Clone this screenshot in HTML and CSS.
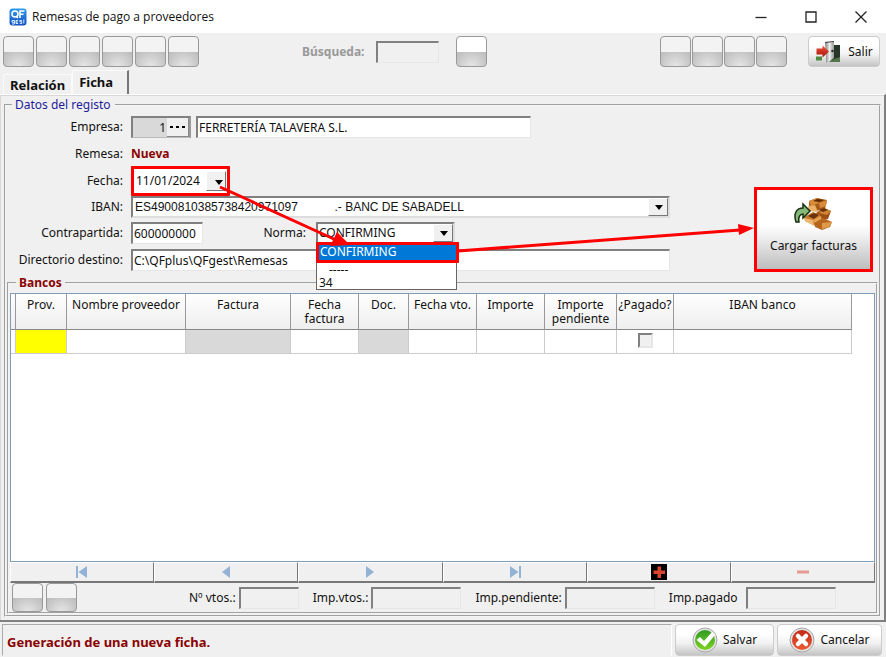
FILE: index.html
```html
<!DOCTYPE html>
<html lang="es">
<head>
<meta charset="utf-8">
<meta name="viewport" content="width=device-width, initial-scale=1">
<title>Remesas de pago a proveedores</title>
<link rel="stylesheet" href="styles.css">
</head>
<body>
<div class="window">
  <header class="titlebar">
    <svg class="app-icon" viewBox="0 0 18 18" aria-hidden="true">
      <defs><linearGradient id="blue" x1="0" y1="0" x2="0" y2="1"><stop offset="0" stop-color="#2f9bf0"/><stop offset="1" stop-color="#1450c0"/></linearGradient></defs>
      <rect x="0.5" y="0.5" width="17" height="17" rx="3" fill="url(#blue)"/>
      <circle cx="6" cy="6" r="3" fill="none" stroke="#fff" stroke-width="1.6"/>
      <path d="M7 8l2 2M11 10V3h4.5M11 6.300h3.500" fill="none" stroke="#fff" stroke-width="1.600"/>
      <path d="M3 12.500h2.500v3.500H3M3 12.500v1.800h2.500M7 14h2M9 12.500H7v3h2.200M12.800 12.500h-2v1.200h2v1.800h-2M14.800 11.500v4" fill="none" stroke="#d4e9ff" stroke-width="1"/>
    </svg>
    <h1>Remesas de pago a proveedores</h1>
    <div class="window-controls">
      <button type="button" aria-label="Minimizar"><svg viewBox="0 0 12 12"><path d="M0.500 6.500h11"/></svg></button>
      <button type="button" aria-label="Maximizar"><svg viewBox="0 0 12 12"><path d="M1 1h10v10H1z"/></svg></button>
      <button type="button" aria-label="Cerrar"><svg viewBox="0 0 12 12"><path d="M0.500 0.500l11 11M11.500 0.500l-11 11"/></svg></button>
    </div>
  </header>

  <div class="toolbar">
    <div class="group">
      <button type="button" class="glass" aria-label="Primero"></button>
      <button type="button" class="glass" aria-label="Anterior"></button>
      <button type="button" class="glass" aria-label="Siguiente"></button>
      <button type="button" class="glass" aria-label="Último"></button>
      <button type="button" class="glass" aria-label="Añadir"></button>
      <button type="button" class="glass" aria-label="Editar"></button>
    </div>
    <div class="search">
      <label for="busqueda">Búsqueda:</label>
      <input id="busqueda" class="sunken" type="text" disabled>
      <button type="button" class="glass" aria-label="Buscar"></button>
    </div>
    <div class="group actions">
      <button type="button" class="glass" aria-label="Listar"></button>
      <button type="button" class="glass" aria-label="Imprimir"></button>
      <button type="button" class="glass" aria-label="Exportar"></button>
      <button type="button" class="glass" aria-label="Opciones"></button>
    </div>
    <button type="button" class="push exit">
      <svg class="exit-icon" viewBox="0 0 26 24" aria-hidden="true">
        <defs><linearGradient id="door" x1="0" y1="0" x2="1" y2="0"><stop offset="0" stop-color="#777"/><stop offset="0.500" stop-color="#eee"/><stop offset="1" stop-color="#999"/></linearGradient>
        <linearGradient id="arrowRed" x1="0" y1="0" x2="0" y2="1"><stop offset="0" stop-color="#f0523a"/><stop offset="1" stop-color="#a81208"/></linearGradient></defs>
        <path d="M18 5h7v17h-9z" fill="#26352a"/>
        <path d="M16 20l9-3v5h-11z" fill="#52764c"/>
        <path d="M10 2l9-1v17l-8 5V14z" fill="url(#door)"/>
        <path d="M10 2l9-1v1l-9 1z" fill="#444"/>
        <circle cx="17.500" cy="11" r="1.300" fill="#333"/>
        <path d="M1 16.500h6v4H1z" fill="#4f8a42"/>
        <path d="M1.500 8.500h6V5.500l6.500 6-6.500 6v-3h-6z" fill="url(#arrowRed)"/>
      </svg>
      Salir
    </button>
  </div>

  <nav class="tabs">
    <button type="button" class="tab">Relación</button>
    <button type="button" class="tab active">Ficha</button>
  </nav>

  <main class="page">
    <fieldset class="record">
      <legend>Datos del registo</legend>
      <div class="form">
        <div class="fields">
          <label for="empresa">Empresa:</label>
          <div class="row">
            <span class="code"><input id="empresa" type="text" value="1"><button type="button" aria-label="Elegir empresa"><svg viewBox="0 0 16 4"><path d="M0 1h3v2H0zM6 1h3v2H6zM12 1h3v2h-3z"/></svg></button></span>
            <input class="sunken company" type="text" aria-label="Nombre de la empresa" value="FERRETERÍA TALAVERA S.L.">
          </div>
          <span class="caption">Remesa:</span>
          <div class="row"><strong class="new">Nueva</strong></div>
          <label for="fecha">Fecha:</label>
          <div class="row">
            <span class="combo date marked"><input id="fecha" type="text" value="11/01/2024"></span>
          </div>
          <label for="iban">IBAN:</label>
          <div class="row">
            <span class="combo iban"><select id="iban"><option>ES4900810385738420971097&nbsp;&nbsp;&nbsp;&nbsp;&nbsp;&nbsp;&nbsp;&nbsp;&nbsp;&nbsp;&nbsp;.- BANC DE SABADELL</option></select></span>
          </div>
          <label for="contra">Contrapartida:</label>
          <div class="row">
            <input id="contra" class="sunken account" type="text" value="600000000">
            <label for="norma" class="norma-label">Norma:</label>
            <span class="combo norma">
              <select id="norma"><option>CONFIRMING</option><option>-----</option><option>34</option></select>
              <span class="menu">
                <span class="item selected marked">CONFIRMING</span>
                <span class="item dashes">-----</span>
                <span class="item">34</span>
              </span>
            </span>
          </div>
          <label for="directorio">Directorio destino:</label>
          <div class="row"><input id="directorio" class="sunken folder" type="text" value="C:\QFplus\QFgest\Remesas"></div>
        </div>
        <button type="button" class="load marked">
          <svg class="boxes" viewBox="0 0 40 34" aria-hidden="true">
            <path d="M15 4l8-3 10 2-2 9-9 2-7-3z" fill="#a85a18"/>
            <path d="M15 4l8-3 2 5-8 3zM25 6l8-3-1 6-6 2z" fill="#d88c3a"/>
            <path d="M19 4l4-2 7 1-5 2z" fill="#5b2a08"/>
            <path d="M14 9l7-1 3 7-9-1z" fill="#eab068"/>
            <path d="M22 16l8-5 7 3-3 8-9 1z" fill="#9c4f14"/>
            <path d="M30 11l7 3-4 4-8-2z" fill="#d38430"/>
            <path d="M25 13l5-2 4 2-5 2z" fill="#6b330c"/>
            <path d="M10 20l9-5 7 3 2 10-8 0-9-4z" fill="#c97a2b"/>
            <path d="M14 19l6-3 5 2-5 4z" fill="#6b330c"/>
            <path d="M10 21l9 2 1 6-9-5z" fill="#edb673"/>
            <path d="M19 23l8-4 1 5-7 3z" fill="#e5a250"/>
            <path d="M20 26l9-5 9 4-2 5-8 3-7-3z" fill="#b5651d"/>
            <path d="M28 26l10-1-3 5-7 2z" fill="#df9a48"/>
            <path d="M2 25C-1 16 3 11 9 11V7l7 7-7 7v-4c-3 0-5 3-4 8z" fill="#86b878" stroke="#17300f" stroke-width="1.500"/>
          </svg>
          Cargar facturas
        </button>
      </div>

      <fieldset class="banks">
        <legend>Bancos</legend>
        <div class="sheet">
          <table>
            <colgroup><col class="c-mark"><col class="c-prov"><col class="c-name"><col class="c-invoice"><col class="c-date"><col class="c-doc"><col class="c-date"><col class="c-date"><col class="c-pending"><col class="c-paid"><col></colgroup>
            <thead><tr><th></th><th>Prov.</th><th>Nombre proveedor</th><th>Factura</th><th>Fecha factura</th><th>Doc.</th><th>Fecha vto.</th><th>Importe</th><th>Importe pendiente</th><th>¿Pagado?</th><th>IBAN banco</th></tr></thead>
            <tbody><tr><td></td><td class="required"></td><td></td><td class="locked"></td><td></td><td class="locked"></td><td></td><td></td><td></td><td class="check"><input type="checkbox" aria-label="Pagado"></td><td></td></tr></tbody>
          </table>
        </div>
        <div class="navigator">
          <button type="button" aria-label="Primera línea"><svg viewBox="0 0 16 16"><path d="M2 2h2v12H2zM13 2v12L4.500 8z"/></svg></button>
          <button type="button" aria-label="Línea anterior"><svg viewBox="0 0 16 16"><path d="M12 2v12L4 8z"/></svg></button>
          <button type="button" aria-label="Línea siguiente"><svg viewBox="0 0 16 16"><path d="M4 2v12l8-6z"/></svg></button>
          <button type="button" aria-label="Última línea"><svg viewBox="0 0 16 16"><path d="M12 2h2v12h-2zM3 2v12l8.500-6z"/></svg></button>
          <button type="button" aria-label="Añadir línea"><svg viewBox="0 0 16 16"><path d="M0 0h16v16H0z" fill="#000"/><path d="M6.500 2.500h3.500v4h4V10h-4v4H6.500v-4h-4V6.500h4z" fill="#d9452f"/></svg></button>
          <button type="button" aria-label="Borrar línea"><svg viewBox="0 0 16 16"><path d="M2 6.500h12v3H2z" fill="#e39b92"/></svg></button>
        </div>
        <div class="totals">
          <div class="group">
            <button type="button" class="glass" aria-label="Marcar"></button>
            <button type="button" class="glass" aria-label="Desmarcar"></button>
          </div>
          <div class="total count"><label for="t1">Nº vtos.:</label><input id="t1" class="sunken" type="text" readonly></div>
          <div class="total"><label for="t2">Imp.vtos.:</label><input id="t2" class="sunken" type="text" readonly></div>
          <div class="total"><label for="t3">Imp.pendiente:</label><input id="t3" class="sunken" type="text" readonly></div>
          <div class="total paid"><label for="t4">Imp.pagado</label><input id="t4" class="sunken" type="text" readonly></div>
        </div>
      </fieldset>
    </fieldset>
  </main>

  <footer class="status">
    <p>Generación de una nueva ficha.</p>
    <button type="button" class="push">
      <svg class="round" viewBox="0 0 26 26" aria-hidden="true">
        <defs><linearGradient id="ok" x1="0" y1="0" x2="0" y2="1"><stop offset="0" stop-color="#2f9a24"/><stop offset="1" stop-color="#7ed321"/></linearGradient></defs>
        <circle cx="13" cy="13" r="12" fill="#e4e4e4" stroke="#a8a8a8"/>
        <circle cx="13" cy="13" r="10" fill="url(#ok)"/>
        <path d="M4.500 13l3.500-3 4 4 8-9 3.500 2.500L13 20z" fill="#fff"/>
      </svg>
      Salvar
    </button>
    <button type="button" class="push">
      <svg class="round" viewBox="0 0 26 26" aria-hidden="true">
        <defs><linearGradient id="no" x1="0" y1="0" x2="0" y2="1"><stop offset="0" stop-color="#c02a18"/><stop offset="1" stop-color="#ee5a32"/></linearGradient></defs>
        <circle cx="13" cy="13" r="12" fill="#e4e4e4" stroke="#a8a8a8"/>
        <circle cx="13" cy="13" r="10" fill="url(#no)"/>
        <path d="M9 9l8 8M17 9l-8 8" stroke="#fff" stroke-width="4.500" stroke-linecap="round"/>
      </svg>
      Cancelar
    </button>
  </footer>

  <svg class="arrows" viewBox="0 0 540 80" aria-hidden="true">
    <path d="M4 7l116 53M242 71l282-21" fill="none" stroke="#f00" stroke-width="3"/>
    <path d="M134 65l-20 1 7-14zM538 48l-15 7-1-11z" fill="#f00"/>
  </svg>
</div>
</body>
</html>
```
FILE: styles.css
```css
* {
  box-sizing: border-box;
}

body {
  margin: 0;
  background: #f0f0f0;
  color: #111;
  font: 12px/14px "Noto Sans", sans-serif;
}

button,
input,
select {
  margin: 0;
  font: inherit;
  color: inherit;
}

fieldset {
  min-width: 0;
  margin: 0;
}

.window {
  position: relative;
  display: flex;
  flex-direction: column;
  min-height: 100vh;
}

/* Title bar */
.titlebar {
  display: flex;
  align-items: center;
  height: 33px;
  padding-left: 9px;
  gap: 5px;
  background: #fff;
}

.app-icon {
  width: 18px;
  height: 18px;
}

.titlebar h1 {
  margin: 0;
  font: 12px/16px "Open Sans", sans-serif;
}

.window-controls {
  display: flex;
  margin-left: auto;
}

.window-controls button {
  width: 50px;
  height: 32px;
  padding: 0;
  border: 0;
  background: none;
}

.window-controls svg {
  width: 12px;
  height: 12px;
  fill: none;
  stroke: #222;
  stroke-width: 1.3;
  vertical-align: middle;
}

/* Toolbar */
.toolbar {
  display: flex;
  align-items: center;
  height: 37px;
  padding: 0 6px 0 3px;
}

.group {
  display: flex;
  gap: 2px;
}

.actions {
  gap: 1px;
  margin-left: auto;
  margin-right: 21px;
}

.glass {
  width: 31px;
  height: 31px;
  padding: 0;
  border: 1px solid #999;
  border-radius: 4px;
  background:
    radial-gradient(ellipse at 50% 100%, #e6e6e6, #bababa) bottom / 100% 50% no-repeat,
    #f3f3f3;
}

.search {
  display: flex;
  align-items: center;
  margin-left: 103px;
  color: #999;
  font-weight: bold;
}

.search input {
  width: 63px;
  margin: 0 17px 0 11px;
}

.search .glass {
  background-color: #fff;
}

.sunken {
  height: 22px;
  padding: 0 1px;
  border: 2px solid;
  border-color: #808080 #e6e6e6 #e6e6e6 #808080;
  border-right-width: 1px;
  border-bottom-width: 1px;
  border-radius: 0;
  background: #fff;
}

.search .sunken,
.totals .sunken {
  background: #f0f0f0;
}

.push {
  display: flex;
  align-items: center;
  justify-content: center;
  gap: 5px;
  height: 31px;
  padding: 0 6px;
  border: 1px solid #ccc;
  border-radius: 4px;
  background: linear-gradient(#fff 30%, #f2f2f2 60%, #c4c4c4);
}

.exit {
  gap: 7px;
  width: 72px;
}

.exit-icon {
  width: 26px;
  height: 24px;
}

/* Tabs */
.tabs {
  display: flex;
  align-items: flex-end;
  height: 24px;
  padding-left: 3px;
}

.tab {
  height: 20px;
  padding: 0 6px;
  border: 1px solid #fafafa;
  border-bottom: 0;
  background: none;
  font-size: 13px;
  font-weight: bold;
}

.tab.active {
  height: 24px;
  padding: 0 14px 2px 6px;
  border-right: 2px solid #777;
}

/* Page */
.page {
  display: flex;
  flex: 1;
  padding: 3px 3px 3px 4px;
  border-top: 1px solid #fff;
  border-right: 2px solid #808080;
  border-bottom: 2px solid #808080;
  box-shadow: inset 1px 1px #d8d8d8;
}

.record {
  display: flex;
  flex: 1;
  flex-direction: column;
  padding: 2px 1px 1px;
  border: 2px groove #f4f4f4;
}

.record > legend {
  height: 14px;
  margin-left: 5px;
  padding: 0 4px 0 3px;
  color: #1c1c9c;
}

.form {
  display: flex;
  align-items: flex-end;
  justify-content: space-between;
  padding-right: 5px;
}

.fields {
  display: grid;
  flex: 1;
  grid-template-columns: 116px 1fr;
  grid-template-rows: 26px 28px 26px 26px 26px 28px;
  align-items: center;
  column-gap: 8px;
  margin-right: 84px;
}

.fields > label,
.caption {
  justify-self: end;
}

.row {
  display: flex;
  align-items: center;
}

.code {
  display: flex;
  width: 60px;
  height: 22px;
  margin-right: 5px;
  border: 2px solid #808080;
  border-right-color: #999;
  border-bottom: 1px solid #bbb;
}

.code input {
  flex: 1;
  width: 0;
  padding: 0 1px;
  border: 0;
  background: #d9d9d9;
  text-align: right;
}

.code button {
  display: grid;
  place-items: center;
  width: 22px;
  padding: 0;
  border: 0;
  border-right: 1px solid #888;
  border-bottom: 1px solid #888;
  background: #f0f0f0;
}

.code svg {
  width: 16px;
  height: 4px;
}

.company {
  width: 335px;
}

.new {
  color: #8b0000;
}

.marked {
  outline: 3px solid #f00;
  outline-offset: -3px;
  border-radius: 1px;
}

.combo {
  position: relative;
  display: flex;
  height: 22px;
  border: 2px solid;
  border-color: #808080 #ddd #ddd #808080;
  background: #fff;
}

.combo > input,
.combo > select {
  flex: 1;
  min-width: 0;
  padding: 0 1px;
  border: 0;
  border-radius: 0;
  outline: 0;
  background: none;
  appearance: none;
}

.combo::before {
  content: "";
  position: absolute;
  inset: 0 0 0 auto;
  width: 18px;
  border: 1px solid;
  border-color: #fff #777 #777 #fff;
  background: #f0f0f0;
}

.combo::after {
  content: "";
  position: absolute;
  top: 7px;
  right: 5px;
  border: 4px solid transparent;
  border-top: 5px solid #000;
  border-bottom: 0;
}

.date {
  width: 99px;
  height: 30px;
  padding: 2px;
}

.date::before {
  inset: 3px 2px 3px auto;
}

.date::after {
  top: 12px;
}

.iban {
  flex: 1;
  font-family: "Liberation Sans", sans-serif;
}

.iban > select {
  padding-left: 2px;
}

.account {
  width: 72px;
}

.norma-label {
  width: 103px;
  margin-right: 10px;
  text-align: right;
}

.norma {
  width: 139px;
}

.menu {
  position: absolute;
  z-index: 1;
  top: 18px;
  left: -2px;
  width: 141px;
  border: 1px solid #666;
  background: #fff;
}

.item {
  display: block;
  height: 13px;
  padding-left: 2px;
}

.selected {
  height: 21px;
  margin: -1px -3px 0 -1px;
  padding: 3px 4px;
  background: #0078d7;
  color: #fff;
}

.dashes {
  padding-left: 12px;
}

.folder {
  flex: 1;
}

.load {
  display: flex;
  flex-direction: column;
  align-items: center;
  width: 119px;
  height: 85px;
  margin-bottom: 2px;
  padding: 7px 0 0;
  gap: 8px;
  border: 3px solid #f00;
  background: linear-gradient(#fff 45%, #eee 60%, #bdbdbd);
}

.boxes {
  width: 40px;
  height: 34px;
}

/* Bank grid */
.banks {
  display: flex;
  flex: 1;
  flex-direction: column;
  margin-top: 2px;
  padding: 3px 1px 0;
  border: 2px groove #f4f4f4;
}

.banks > legend {
  height: 14px;
  margin-left: 6px;
  padding: 0 3px;
  color: #8b0000;
  font-weight: bold;
}

.sheet {
  flex: 1;
  border: 1px solid #7f9db9;
  background: #fff;
}

table {
  width: calc(100% - 22px);
  table-layout: fixed;
  border-collapse: separate;
  border-spacing: 0;
}

.c-mark { width: 5px; }
.c-prov { width: 51px; }
.c-name { width: 119px; }
.c-invoice { width: 105px; }
.c-date { width: 68px; }
.c-doc { width: 50px; }
.c-pending { width: 72px; }
.c-paid { width: 57px; }

th {
  height: 36px;
  padding: 4px 0 0;
  border-right: 1px solid #999;
  border-bottom: 1px solid #888;
  background: linear-gradient(#fff, #eee);
  font-weight: normal;
  vertical-align: top;
}

td {
  height: 24px;
  padding: 0;
  border-right: 1px solid #ccc;
  border-bottom: 1px solid #ccc;
}

.required {
  background: #ff0;
}

.locked {
  background: #d9d9d9;
}

.check {
  text-align: center;
  vertical-align: top;
}

.check input {
  width: 15px;
  height: 15px;
  margin-top: 3px;
  border: 2px solid;
  border-color: #808080 #e6e6e6 #e6e6e6 #808080;
  background: #f0f0f0;
  appearance: none;
}

.navigator {
  display: grid;
  grid-template-columns: repeat(6, 1fr);
}

.navigator button {
  display: grid;
  place-items: center;
  height: 21px;
  padding: 0;
  border: 1px solid;
  border-color: #fff #777 #777 #fff;
  border-bottom-width: 2px;
  background: #f0f0f0;
}

.navigator svg {
  width: 16px;
  height: 16px;
  fill: #93b3d6;
}

.totals {
  display: flex;
  align-items: center;
  height: 29px;
  padding-left: 2px;
}

.totals .group {
  gap: 3px;
}

.totals .glass {
  height: 29px;
}

.total {
  display: flex;
  align-items: center;
  gap: 3px;
  margin-left: 14px;
}

.total input {
  width: 90px;
}

.count {
  margin-left: 112px;
}

.count input {
  width: 60px;
}

.paid {
  gap: 8px;
}

/* Status bar */
.status {
  display: flex;
  align-items: stretch;
  gap: 3px;
  padding: 2px 4px 1px 2px;
}

.status p {
  display: flex;
  flex: 1;
  align-items: center;
  margin: 0;
  padding: 4px 4px 0;
  border: 1px solid;
  border-color: #aaa #fff #f0f0f0 #aaa;
  color: #8b0000;
  font-size: 13px;
  font-weight: bold;
}

.status .push {
  width: 99px;
  height: 32px;
}

.status .push:last-child {
  width: 105px;
}

.round {
  width: 26px;
  height: 26px;
}

/* Guide arrows laid over the form */
.arrows {
  position: absolute;
  z-index: 2;
  top: 180px;
  left: 216px;
  width: 540px;
  height: 80px;
  pointer-events: none;
}
```
